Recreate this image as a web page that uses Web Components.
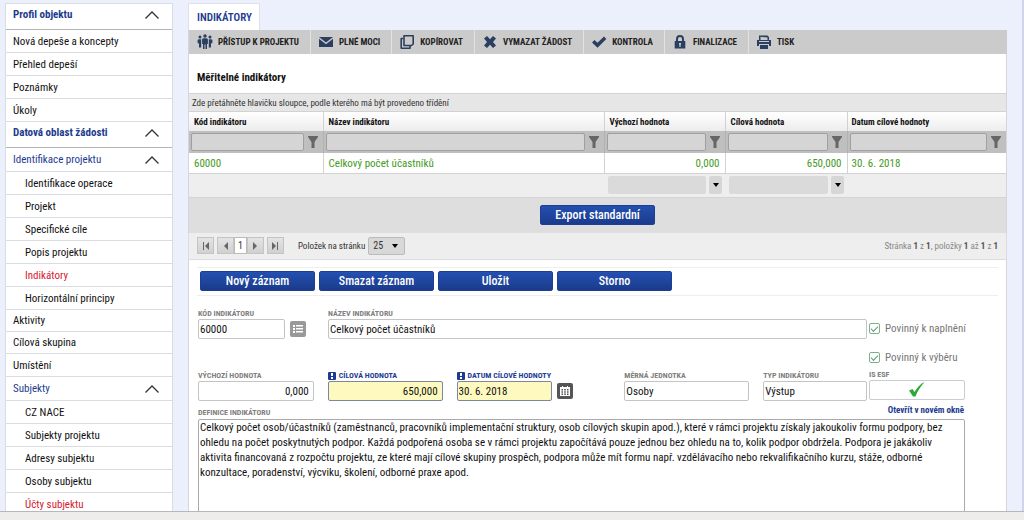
<!DOCTYPE html>
<html lang="cs">
<head>
<meta charset="utf-8">
<title>Indikátory</title>
<style>
html,body{margin:0;height:100%}
body{font-family:"Roboto Condensed","Liberation Sans Narrow",Roboto,sans-serif;font-size:11px;color:#111;background:#ecf0fc;overflow:hidden;--blue:#1d3c8f;--line:#d9dce0}
</style>
</head>
<body>
<app-shell>
  <side-nav slot="nav">
    <nav-head>Profil objektu</nav-head>
    <nav-link>Nová depeše a koncepty</nav-link>
    <nav-link>Přehled depeší</nav-link>
    <nav-link>Poznámky</nav-link>
    <nav-link>Úkoly</nav-link>
    <nav-head>Datová oblast žádosti</nav-head>
    <nav-head sub>Identifikace projektu</nav-head>
    <nav-link nested>Identifikace operace</nav-link>
    <nav-link nested>Projekt</nav-link>
    <nav-link nested>Specifické cíle</nav-link>
    <nav-link nested>Popis projektu</nav-link>
    <nav-link nested current>Indikátory</nav-link>
    <nav-link nested>Horizontální principy</nav-link>
    <nav-link short>Aktivity</nav-link>
    <nav-link short>Cílová skupina</nav-link>
    <nav-link>Umístění</nav-link>
    <nav-head sub>Subjekty</nav-head>
    <nav-link nested>CZ NACE</nav-link>
    <nav-link nested>Subjekty projektu</nav-link>
    <nav-link nested>Adresy subjektu</nav-link>
    <nav-link nested>Osoby subjektu</nav-link>
    <nav-link nested current>Účty subjektu</nav-link>
  </side-nav>
  <tab-strip></tab-strip>
  <tool-bar>
    <tool-button icon="people">PŘÍSTUP K PROJEKTU</tool-button>
    <tool-button icon="mail">PLNÉ MOCI</tool-button>
    <tool-button icon="copy">KOPÍROVAT</tool-button>
    <tool-button icon="cross">VYMAZAT ŽÁDOST</tool-button>
    <tool-button icon="check">KONTROLA</tool-button>
    <tool-button icon="lock">FINALIZACE</tool-button>
    <tool-button icon="print">TISK</tool-button>
  </tool-bar>
  <data-grid></data-grid>
  <grid-pager></grid-pager>
  <action-row>
    <push-button>Nový záznam</push-button>
    <push-button>Smazat záznam</push-button>
    <push-button>Uložit</push-button>
    <push-button>Storno</push-button>
  </action-row>
  <indicator-form></indicator-form>
</app-shell>
<script>
function define(name, html, setup) {
  const template = document.createElement('template');
  template.innerHTML = '<style>*{box-sizing:border-box}button,input,textarea,select{font:inherit;color:inherit;margin:0}</style>' + html;
  customElements.define(name, class extends HTMLElement {
    constructor() {
      super();
      this.attachShadow({mode: 'open'}).append(template.content.cloneNode(true));
    }
    connectedCallback() { if (setup) setup(this, this.shadowRoot); }
  });
}

const icons = {
  people: '<circle cx="3" cy="3" r="1.5"/><circle cx="8" cy="2" r="1.7"/><circle cx="13" cy="3" r="1.5"/><path d="M1.600 5.200h2.600v8.300H2V9.500L.6 9V6zM11.800 5.200h2.600l1 .8v3l-1.400.5v4h-2.200zM6.200 4.300h3.600l1.100 1V10H10v5H8.500v-4.500h-1V15H6v-5h-.9V5.300z"/>',
  mail: '<path d="M1 3h14L8 8.600zM1 4.800l7 5.400 7-5.400V13H1z"/>',
  copy: '<path fill="none" stroke="currentColor" stroke-width="1.600" stroke-linejoin="round" d="M5 1.800h9.200v8.200L12.500 11.500H5zM4 4.500H2.200v9.700H11v-2"/>',
  cross: '<path d="M2 4.500 5 2l3 3.300L11 2l3 2.500L11 8l3 3.500L11 14l-3-3.300L5 14l-3-2.500L5 8z"/>',
  check: '<path d="M1 8.500 3.500 6l3 2.800L13 2.500 15.300 5 6.500 13.800z"/>',
  lock: '<path fill-rule="evenodd" d="M4 7V5a4 4 0 0 1 8 0v2h1.300v7.500H2.700V7zm2 0h4V5a2 2 0 0 0-4 0zM7 9v1.400l.4.400V13h1.200v-2.200l.4-.400V9z"/>',
  print: '<path fill-rule="evenodd" d="M3 1.500h8.500L13 3v4H3zm1.500 1.300V6h7V3.500zM1 6h2v2h10V6h2v6h-2v-2H3v2H1zM4 11h8v4H4z"/>'
};

define('app-shell', `<style>
:host{display:flex;flex-direction:column;height:100vh}
.body{flex:1;min-height:0;display:flex;gap:15px;padding:3px 15px 0 5px;overflow:hidden;border-right:2px solid #d0d5ee}
aside{width:168px;flex:none}
main{flex:1;min-width:0;display:flex;flex-direction:column}
footer{height:9px;flex:none;background:#efedec;border-top:1px solid #b6b6bb}
</style><div class="body"><aside><slot name="nav"></slot></aside><main><slot></slot></main></div><footer></footer>`);

define('side-nav', `<style>
:host{display:block}
nav{background:#fff;border:1px solid var(--line);border-bottom:0}
</style><nav aria-label="Navigace"><slot></slot></nav>`);

define('nav-head', `<style>
:host{display:block}
button{display:flex;align-items:center;justify-content:space-between;width:100%;height:26px;padding:0 12px 4px 7px;border:0;border-bottom:1px solid #b4b4b4;background:none;font-weight:700;color:var(--blue);text-align:left}
:host([sub]) button{height:24px;padding-bottom:0;font-weight:400;border-color:var(--line)}
</style><button aria-expanded="true"><slot></slot><svg width="16" height="10" viewBox="0 0 16 10" fill="none" stroke="#333" stroke-width="1.300"><path d="M1.500 8.500 8 2l6.500 6.500"/></svg></button>`);

define('nav-link', `<style>
:host{display:block}
a{display:flex;align-items:center;height:23px;padding-left:7px;border-bottom:1px solid var(--line);color:inherit;text-decoration:none}
:host([nested]) a{padding-left:19px}
:host([short]) a{height:22px}
:host([current]) a{color:#d6202f}
</style><a href="#"><slot></slot></a>`);

define('tab-strip', `<style>
:host{display:flex}
a{display:flex;align-items:center;height:27px;padding:0 7px 0 8px;background:#fff;border:1px solid #dde0ea;border-bottom:0;border-radius:2px 2px 0 0;color:var(--blue);font-weight:600;text-decoration:none}
</style><a href="#">INDIKÁTORY</a>`);

define('tool-bar', `<style>
:host{display:flex;flex:none;height:24px;padding-left:1px;background:#cbcbcb;border-left:1px solid #d3d6e2}
</style><slot></slot>`);

define('tool-button', `<style>
:host{display:block}
button{display:flex;align-items:center;gap:5px;height:24px;padding:0 11px 0 7px;border:0;border-right:1px solid #e2e2e2;background:none;font-size:9px;font-weight:700;color:#222;white-space:nowrap}
:host(:last-child) button{border:0}
svg{color:#2b3f60;fill:currentColor}
</style><button><svg width="16" height="16" viewBox="0 0 16 16"></svg><slot></slot></button>`,
  (el, root) => { root.querySelector('svg').innerHTML = icons[el.getAttribute('icon')]; });

define('push-button', `<style>
:host{display:block}
button{display:block;width:115px;height:20px;padding:0;border:1px solid #1d3e92;border-radius:2px;background:linear-gradient(#2450b0,#1b3b8c);color:#fff;font-size:12px;font-weight:500;line-height:18px;white-space:nowrap}
</style><button><slot></slot></button>`);

const funnel = '<button class="f" aria-label="Filtr"><svg width="10" height="12" viewBox="0 0 10 12" fill="#666"><path d="M0 0h10v1L6.500 6v6h-3V6L0 1z"/></svg></button>';
const filterCell = label => `<td><div><input aria-label="${label}">${funnel}</div></td>`;
const sumCell = label => `<td><div class="sum"><input readonly aria-label="${label}"><button aria-label="Vybrat"><svg width="6" height="4" viewBox="0 0 6 4"><path d="M0 0h6L3 4z"/></svg></button></div></td>`;
define('data-grid', `<style>
:host{display:block;flex:none;background:#fff;border:solid #d3d6e2;border-width:0 1px}
h2{margin:0;padding:4px 8px 0;font-size:11px;line-height:39px;height:39px;color:#111}
.group{height:19px;padding-left:3px;line-height:18px;background:#e6e6e6;border-top:1px solid #d2d2d2;border-bottom:1px solid #d2d2d2;font-size:9px;color:#333}
table{width:100%;table-layout:fixed;border-collapse:collapse}
th,td{padding:0 5px;border-right:1px solid #d2d2d2}
th:last-child,td:last-child{border-right:0}
th{height:19px;text-align:left;font-size:9px;color:#111;background:linear-gradient(#fff,#ececec)}
th:last-child,.rec td:last-child{padding-left:4px}
.filter td{height:22px;padding:0 5px 0 2px;background:#bfbfbf;border-color:#b2b2b2}
.filter div{display:flex;align-items:center;gap:4px}
.filter input{flex:1;min-width:0;height:18px;border:1px solid #a0a0a0;border-radius:2px;background:#d5d5d5;padding:0 3px}
.f{display:flex;padding:0;border:0;background:none}
.rec td{height:20px;padding-top:2px;color:#449a1c;border-bottom:1px solid #d2d2d2}
.n{text-align:right}
.foot td{height:24px;padding:0 3px 0 4px;background:#eee;border-right:0;border-bottom:1px solid #d4d4d4}
.sum{display:flex;gap:3px}
.sum input{flex:1;min-width:0;height:18px;border:0;border-radius:2px;background:#dadada}
.sum button{width:13px;height:18px;padding:0;border:0;border-radius:2px;background:#d6d6d6;display:flex;align-items:center;justify-content:center}
.export{display:flex;justify-content:center;height:35px;padding-top:7px;background:#dedede}
</style>
<h2>Měřitelné indikátory</h2>
<div class="group">Zde přetáhněte hlavičku sloupce, podle kterého má být provedeno třídění</div>
<table><colgroup><col style="width:134px"><col><col style="width:121px"><col style="width:122px"><col style="width:159px"></colgroup>
<thead><tr><th>Kód indikátoru</th><th>Název indikátoru</th><th>Výchozí hodnota</th><th>Cílová hodnota</th><th>Datum cílové hodnoty</th></tr></thead>
<tbody><tr class="filter">${['Kód indikátoru','Název indikátoru','Výchozí hodnota','Cílová hodnota','Datum cílové hodnoty'].map(filterCell).join('')}</tr>
<tr class="rec"><td>60000</td><td>Celkový počet účastníků</td><td class="n">0,000</td><td class="n">650,000</td><td>30. 6. 2018</td></tr>
<tr class="foot"><td></td><td></td>${sumCell('Souhrn výchozí')}${sumCell('Souhrn cílová')}<td></td></tr></tbody></table>
<div class="export"><push-button>Export standardní</push-button></div>`);

const pageButton = (label, path) => `<button aria-label="${label}"><svg width="8" height="8" viewBox="0 0 8 8" fill="#666"><path d="${path}"/></svg></button>`;
define('grid-pager', `<style>
:host{display:flex;flex:none;align-items:center;height:26px;padding:0 8px;background:#eee;border:1px solid #dadce0;border-top:0;font-size:9px;color:#333}
button{width:17px;height:17px;padding:0;border:1px solid #c4c4c4;background:linear-gradient(#e4e4e4,#d0d0d0);display:flex;align-items:center;justify-content:center}
.pages{display:flex;align-items:center;gap:3px}
.pages span{display:flex;align-items:center}
b.cur{height:17px;padding:0 3px;background:#fff;border:1px solid #bbb;line-height:15px;font-size:10px;font-weight:400}
label{margin-left:14px;margin-right:3px}
.sel{position:relative;display:flex;align-items:center}
select{appearance:none;width:37px;height:18px;padding:0 4px;border:1px solid #bbb;border-radius:2px;background:#d8d8d8;font-size:10px}
.sel svg{position:absolute;right:7px;pointer-events:none}
p{margin:0 0 0 auto;color:#888}
p b{color:#555}
</style>
<div class="pages">${pageButton('První','M1 0h1v8H1zM7 0v8L3 4z')}<span>${pageButton('Předchozí','M6 0v8L2 4z')}<b class="cur">1</b>${pageButton('Další','M2 0v8l4-4z')}</span>${pageButton('Poslední','M6 0h1v8H6zM1 0v8l4-4z')}</div>
<label for="size">Položek na stránku</label>
<span class="sel"><select id="size"><option>25</option><option>50</option></select><svg width="6" height="4" viewBox="0 0 6 4"><path d="M0 0h6L3 4z"/></svg></span>
<p>Stránka <b>1</b> z <b>1</b>, položky <b>1</b> až <b>1</b> z <b>1</b></p>`);

define('action-row', `<style>
:host{display:block;flex:none;background:#fff;padding:7px 8px 0;border:solid #d3d6e2;border-width:0 1px}
div{display:flex;align-items:center;gap:4px;height:29px;padding-left:3px;border:solid #eeeeea;border-width:1px 0}
</style><div><slot></slot></div>`);

define('form-field', `<style>
:host{display:block;min-width:0}
label{display:flex;align-items:center;gap:3px;height:10px;font-size:8px;font-weight:700;line-height:10px;color:#808080;white-space:nowrap}
.row{display:flex;align-items:center;gap:5px}
input{flex:1;min-width:0;width:0;height:20px;padding:1px 1px 0;border:1px solid #c4c4c4;border-radius:2px;background:#fff;color:inherit}
:host([numeric]) input{text-align:right;padding-right:4px}
:host([required]) label{color:var(--blue)}
:host([required]) input{background:#fdf9bf;border-color:#7b86a0}
.mark{display:none}
:host([required]) .mark{display:block}
</style><label for="i"><svg class="mark" width="8" height="8" viewBox="0 0 8 8"><rect width="8" height="8" rx="1" fill="#1d3c8f"/><path fill="#fff" d="M3 1h2v3H3zM3 5h2v2H3z"/></svg><span></span></label><div class="row"><input id="i"><slot></slot></div>`,
  (el, root) => {
    root.querySelector('span').textContent = el.getAttribute('label');
    root.querySelector('input').value = el.getAttribute('value');
  });

define('icon-button', `<style>
:host{display:block;flex:none}
button{display:flex;width:16px;height:16px;padding:2px;border:0;border-radius:2px;background:#999}
:host([icon=calendar]) button{background:#555}
</style><button><svg width="12" height="12" viewBox="0 0 12 12" fill="#fff"></svg></button>`,
  (el, root) => {
    root.querySelector('button').setAttribute('aria-label', el.getAttribute('label'));
    root.querySelector('svg').innerHTML = el.getAttribute('icon') === 'calendar'
      ? '<path fill-rule="evenodd" d="M1 2h2V1h1v1h4V1h1v1h2v9H1zM2.500 4v1.500H4V4zM5.200 4v1.500h1.600V4zM8 4v1.500h1.500V4zM2.500 6.300v1.400H4V6.300zM5.200 6.300v1.400h1.600V6.300zM8 6.300v1.400h1.500V6.300zM2.500 8.500V10H4V8.500zM5.200 8.500V10h1.600V8.500zM8 8.500V10h1.500V8.500z"/>'
      : '<path d="M1 2h2v2H1zM4 2h7v1.500H4zM1 5h2v2H1zM4 5h7v1.500H4zM1 8h2v2H1zM4 8h7v1.500H4z"/>';
  });

define('check-option', `<style>
:host{display:block}
label{display:flex;align-items:center;gap:5px;height:16px;color:#777;white-space:nowrap}
input{appearance:none;flex:none;width:11px;height:11px;border:1px solid #7fae93;border-radius:2px;background:#fff;display:grid;place-items:center}
input:checked::before{content:"";width:6px;height:3px;margin-bottom:2px;border:solid #5b9c76;border-width:0 0 1px 1px;transform:rotate(-45deg)}
</style><label><input type="checkbox" checked><slot></slot></label>`);

define('indicator-form', `<style>
:host{display:block;flex:1;min-height:0;background:#fff;border:solid #d3d6e2;border-width:0 1px;overflow:hidden}
form{display:flex;flex-direction:column;height:100%;padding:13px 41px 0 9px}
.line{display:grid;grid-template-columns:1fr 96px;column-gap:2px}
.top{display:grid;grid-template-columns:108fr 539fr;column-gap:22px}
.bottom{display:grid;grid-template-columns:116fr 115fr 154fr 125fr 104fr;column-gap:14px;margin-top:32px}
.bottom :nth-child(3){margin-right:37px}
.side{display:flex;flex-direction:column;padding-top:12px;gap:13px}
.esf{display:flex;flex-direction:column;margin-top:-9px;font-size:8px;font-weight:700;line-height:10px;color:#808080}
.tick{display:flex;align-items:center;justify-content:center;height:20px;border:1px solid #c9ccd0;border-radius:2px}
.meta{display:flex;justify-content:space-between;height:18px}
.meta label{font-size:8px;font-weight:700;color:#808080;line-height:10px;padding-top:7px}
.meta a{font-size:9px;font-weight:700;color:var(--blue);text-decoration:none;line-height:18px;padding-right:1px}
textarea{flex:none;display:block;width:100%;height:120px;padding:0 1px;border:1px solid #aaa;border-radius:2px;resize:none;line-height:15px;color:inherit;overflow:hidden}
</style>
<form>
<div class="line">
<div><div class="top"><form-field label="KÓD INDIKÁTORU" value="60000"><icon-button label="Seznam"></icon-button></form-field><form-field label="NÁZEV INDIKÁTORU" value="Celkový počet účastníků"></form-field></div>
<div class="bottom"><form-field numeric label="VÝCHOZÍ HODNOTA" value="0,000"></form-field><form-field numeric required label="CÍLOVÁ HODNOTA" value="650,000"></form-field><form-field required label="DATUM CÍLOVÉ HODNOTY" value="30. 6. 2018"><icon-button icon="calendar" label="Kalendář"></icon-button></form-field><form-field label="MĚRNÁ JEDNOTKA" value="Osoby"></form-field><form-field label="TYP INDIKÁTORU" value="Výstup"></form-field></div></div>
<div class="side"><check-option>Povinný k naplnění</check-option><check-option>Povinný k výběru</check-option><div class="esf">IS ESF<div class="tick"><svg width="16" height="15" viewBox="0 0 16 15"><path fill="#2fa836" d="M0 8.500 3.500 7l2 3C8 6 11 2 15.500 0 11.500 4.500 8.500 9 6.500 14.500H4z"/></svg></div></div></div>
</div>
<div class="meta"><label for="def">DEFINICE INDIKÁTORU</label><a href="#">Otevřít v novém okně</a></div>
<textarea id="def">Celkový počet osob/účastníků (zaměstnanců, pracovníků implementační struktury, osob cílových skupin apod.), které v rámci projektu získaly jakoukoliv formu podpory, bez ohledu na počet poskytnutých podpor. Každá podpořená osoba se v rámci projektu započítává pouze jednou bez ohledu na to, kolik podpor obdržela. Podpora je jakákoliv aktivita financovaná z rozpočtu projektu, ze které mají cílové skupiny prospěch, podpora může mít formu např. vzdělávacího nebo rekvalifikačního kurzu, stáže, odborné konzultace, poradenství, výcviku, školení, odborné praxe apod.</textarea>
</form>`);
</script>
</body>
</html>
